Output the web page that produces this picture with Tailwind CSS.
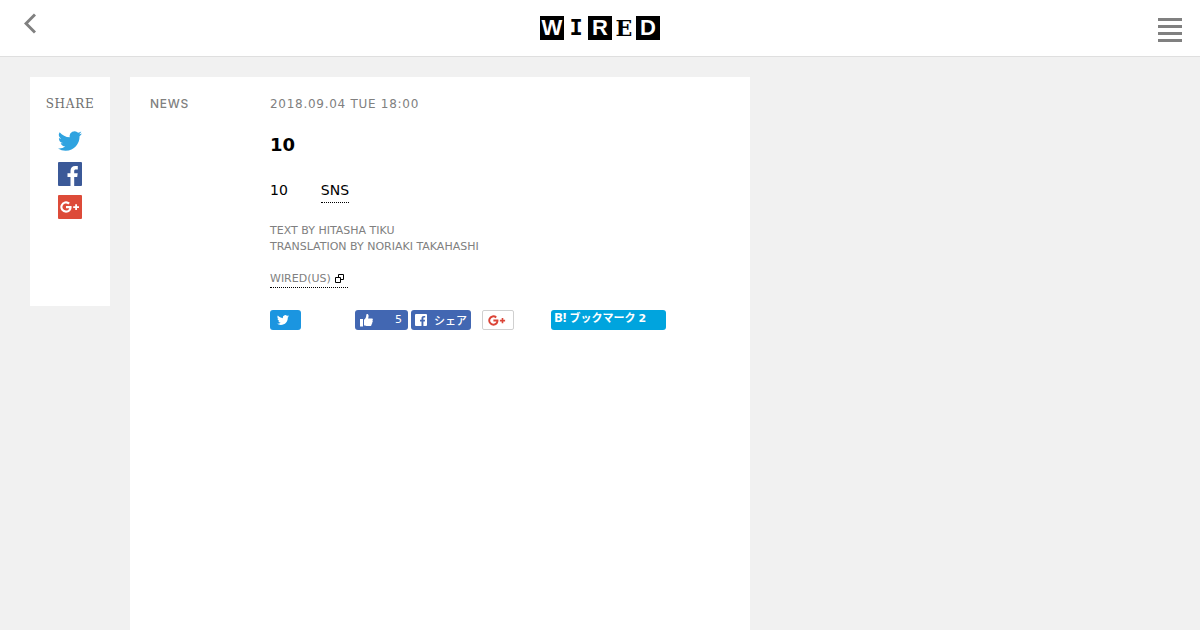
<!DOCTYPE html>
<html lang="ja">
<head>
<meta charset="utf-8">
<meta name="viewport" content="width=device-width, initial-scale=1">
<title>WIRED</title>
<script src="https://cdn.jsdelivr.net/npm/@tailwindcss/browser@4"></script>
</head>
<body class="min-h-screen flex flex-col bg-[#f1f1f1] text-black font-['DejaVu_Sans','Noto_Sans_CJK_JP',sans-serif]">
<svg class="hidden" aria-hidden="true">
  <symbol id="bird" viewBox="0 0 24 24"><path d="M23.95 4.57a10 10 0 0 1-2.82.77 4.96 4.96 0 0 0 2.16-2.72c-.95.55-2 .96-3.13 1.18a4.92 4.92 0 0 0-8.38 4.48C7.69 8.1 4.07 6.13 1.64 3.16a4.92 4.92 0 0 0 1.52 6.57 4.9 4.9 0 0 1-2.23-.61v.06a4.92 4.92 0 0 0 3.95 4.83 5 5 0 0 1-2.21.08 4.94 4.94 0 0 0 4.6 3.42A9.87 9.87 0 0 1 0 19.54a14 14 0 0 0 7.55 2.21c9.05 0 14-7.5 14-13.99 0-.21 0-.42-.02-.63a9.94 9.94 0 0 0 2.42-2.56z"/></symbol>
  <symbol id="gplus" viewBox="0 0 20 12"><path d="M6 5v2.200h3.300C8.900 8.700 7.700 9.500 6 9.500a3.500 3.500 0 1 1 2.300-6.100L9.900 1.800A5.700 5.700 0 1 0 6 11.700c3.400 0 5.600-2.300 5.600-5.600L11.500 5z"/><path d="M15.200 3.200h1.800v2h2v1.800h-2v2h-1.800v-2h-2V5.200h2z"/></symbol>
</svg>
<header class="grid grid-cols-[1fr_auto_1fr] items-start h-[57px] bg-white border-b border-[#dfdfdf]">
  <div class="flex pl-6 pt-3">
    <button aria-label="戻る"><svg class="w-3 h-6" viewBox="0 0 12 24" fill="none" stroke="#808080" stroke-width="3"><path d="M11 2.500 2 11.500l9 9"/></svg></button>
  </div>
  <a href="#" aria-label="WIRED" class="flex mt-4 h-6 text-center font-bold text-[22px] leading-6 font-['Liberation_Sans',sans-serif]">
    <span class="w-6 bg-black text-white">W</span>
    <span class="w-6 font-['DejaVu_Sans_Mono',monospace]">I</span>
    <span class="w-6 bg-black text-white">R</span>
    <span class="w-6 font-['DejaVu_Serif',serif]">E</span>
    <span class="w-6 bg-black text-white">D</span>
  </a>
  <div class="flex justify-end pr-[18px] pt-[18px]">
    <button aria-label="メニュー"><svg class="w-6 h-6" viewBox="0 0 24 24" fill="#808080"><path d="M0 0h24v3H0zM0 7h24v3H0zM0 14h24v3H0zM0 21h24v3H0z"/></svg></button>
  </div>
</header>
<main class="flex grow items-stretch gap-5 px-[30px] pt-5">
  <aside class="self-start flex flex-col items-center w-20 pt-[19px] pb-[87px] bg-white">
    <h2 class="text-[12px] leading-4 tracking-[0.06em] text-[#707070] font-['DejaVu_Serif',serif]">SHARE</h2>
    <div class="flex flex-col gap-[9px] mt-[17px]">
      <a href="#" aria-label="Twitter"><svg class="w-6 h-6" fill="#2fa3e0"><use href="#bird"/></svg></a>
      <a href="#" aria-label="Facebook"><svg class="w-6 h-6" viewBox="0 0 24 24"><rect width="24" height="24" rx="1" fill="#3b5998"/><path fill="#fff" d="M12.500 24v-9H9.500v-3.700h3V8.800c0-3.200 1.900-4.800 4.700-4.800 1.300 0 2.300.1 2.600.1v3.400h-1.800c-1.500 0-1.800.7-1.800 1.700v2.100h3.500L19.200 15h-3v9z"/></svg></a>
      <a href="#" aria-label="Google+"><svg class="w-6 h-6" viewBox="0 0 24 24"><rect width="24" height="24" rx="1" fill="#dd4b39"/><use href="#gplus" x="2" y="6" width="20" height="12" fill="#fff"/></svg></a>
    </div>
  </aside>
  <article class="flex w-full max-w-[620px] px-5 pt-[19px] bg-white">
    <p class="w-[120px] shrink-0 text-[12px] leading-4 font-medium tracking-[0.06em] text-[#808080] font-['Inter',sans-serif]">NEWS</p>
    <div class="grow">
      <time class="block text-[12px] leading-4 tracking-[0.06em] text-[#808080]">2018.09.04 TUE 18:00</time>
      <h1 class="mt-[19px] text-lg leading-7 font-bold">10</h1>
      <p class="flex gap-[33px] mt-[19px] text-sm leading-6"><span>10</span><a href="#" class="border-b border-dotted border-black">SNS</a></p>
      <p class="mt-5 text-[11px] leading-4 text-[#808080]">TEXT BY HITASHA TIKU<br>TRANSLATION BY NORIAKI TAKAHASHI</p>
      <a href="#" class="flex w-fit items-start gap-1 mt-4 pr-1 border-b border-dotted border-black text-[11px] leading-4 text-[#808080]">WIRED(US)
        <svg class="w-[9px] h-[9px] mt-[3px]" viewBox="0 0 9 9" fill="none" stroke="#000"><path d="M3.500 3V.5h5v5H6"/><path d="M.5 3.500h5v5h-5z"/></svg>
      </a>
      <div class="flex mt-[22px] h-5 text-[11px] leading-5 text-white">
        <button aria-label="ツイート" class="flex items-center w-[31px] pl-[7px] rounded-[3px] bg-[#1b95e0]"><svg class="w-3 h-3" fill="#fff"><use href="#bird"/></svg></button>
        <button aria-label="いいね！" class="flex items-center justify-between w-[53px] ml-[54px] pl-[5px] pr-[6px] rounded-[3px] bg-[#4267b2]">
          <svg class="w-[13px] h-[13px]" viewBox="0 0 13 13" fill="#fff"><path d="M0 5h3v7.500H0zM4 5.700C5.800 4.500 6.300 3 6.300.8c0-1.200 2.300-1 2.300 1.200 0 1-.3 1.700-.5 2.400h3.700c1.300 0 1.300 1.700.6 2 .6.500.4 1.600-.2 1.900.3.700 0 1.500-.6 1.700.2 1-.3 2-1.500 2H6.500C5.300 12 4.600 11.500 4 11.300z"/></svg>
          <span>5</span>
        </button>
        <button class="flex items-center gap-[7px] w-[60px] ml-[3px] pl-1 rounded-[3px] bg-[#4267b2] whitespace-nowrap font-medium leading-4 font-['Noto_Sans_CJK_JP',sans-serif]">
          <svg class="w-3 h-3 shrink-0" viewBox="0 0 12 12"><rect width="12" height="12" rx="1" fill="#fff"/><path fill="#4267b2" d="M6.500 12V7.500H5V5.700h1.500V4.400C6.500 2.800 7.500 2 8.900 2h1.300v1.600h-.9c-.7 0-.9.400-.9.900v1.200h1.700l-.3 1.800H8.400V12z"/></svg>シェア
        </button>
        <button aria-label="Google+1" class="flex items-center w-8 ml-[11px] pl-[5px] rounded-[2px] border border-[#d0d0d0] bg-white"><svg class="w-[18px] h-[11px]" fill="#db4437"><use href="#gplus"/></svg></button>
        <button class="flex items-start gap-[3px] w-[115px] ml-[37px] pl-[3px] rounded-[3px] bg-[#00a4de] whitespace-nowrap leading-[14px] font-bold font-['Noto_Sans_CJK_JP',sans-serif]">
          <span class="text-[13px] font-bold font-['Open_Sans',sans-serif]">B!</span><span>ブックマーク<span class="ml-[3px] font-['DejaVu_Sans',sans-serif]">2</span></span>
        </button>
      </div>
    </div>
  </article>
</main>
</body>
</html>
